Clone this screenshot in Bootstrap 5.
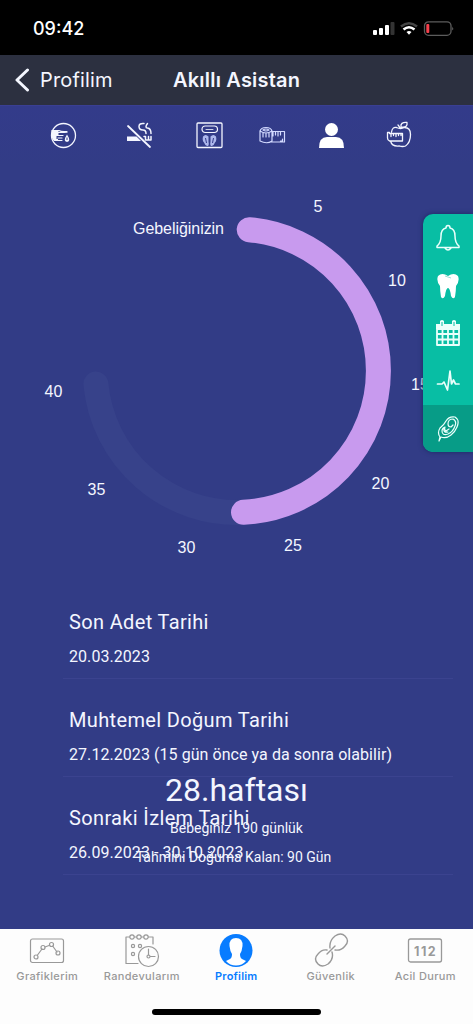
<!DOCTYPE html>
<html lang="tr">
<head>
<meta charset="utf-8">
<meta name="viewport" content="width=device-width, initial-scale=1">
<title>Akıllı Asistan</title>
<link rel="stylesheet" href="https://cdn.jsdelivr.net/npm/bootstrap@5.3.0/dist/css/bootstrap.min.css">
<style>
body{height:1024px;overflow:hidden;background:#323c86;color:#f4f6ff;font-family:Roboto,sans-serif}
svg{display:block}
.ln{fill:none;stroke:currentColor;stroke-linecap:round;stroke-linejoin:round}
.status{height:55px;background:#000;padding:3px 19px 0 33px;font:500 18px/22px Inter,sans-serif;color:#fff}
.topbar{height:50px;background:#2c3040;font-family:Inter,sans-serif;font-size:20px;padding-left:15px}
.topbar .back{color:#f4f6ff;text-decoration:none;font-size:20px;gap:10px;width:158px;letter-spacing:.15px}
.topbar h1{font-size:20px;font-weight:600;margin:0;letter-spacing:.2px}
.tools{height:60px;padding-left:50px;border-top:1px solid #3a3f93;background:linear-gradient(#333b8a,#323c86)}
.gauge{height:435px}
.gauge text{font:16px "Liberation Sans",sans-serif;fill:#f4f6ff}
.side{top:214px;right:0;width:50px;height:238px;background:#08bea4;border-radius:10px 0 0 10px;overflow:hidden;box-shadow:0 0 5px #1c2862;color:#eafffb}
.side a{color:inherit;height:48px}
.side a.on{background:#079c87;height:47px}
.facts{padding:0 20px 0 63px}
.facts li{height:98px;padding:27px 6px 0;border-bottom:1px solid #3b438f}
.facts li:first-child{height:79px;padding-top:8px}
.facts h2{font-size:20px;line-height:28px;margin:0 0 9px;font-weight:400;letter-spacing:.35px}
.facts p{font-size:16px;line-height:24px;margin:0;letter-spacing:.06px}
.summary{top:770px;left:0;right:0;text-align:center;font-size:14px}
.summary strong{font-size:32px;font-weight:400;line-height:40px;display:block}
.summary span{display:block;line-height:28.5px}
.summary .left-days{padding-right:6px}
.tabs{height:95px;background:#fdfdfd;bottom:0;left:0;right:0;font:500 11px/14px Inter,sans-serif;letter-spacing:.35px}
.tabs a{width:94.5px;color:#999;text-decoration:none;padding-top:3px}
.tabs a span{margin-top:-1px}
.tabs a.on{color:#087cff;font-weight:600;letter-spacing:.2px}
.homebar{width:169px;height:6px;border-radius:3px;background:#000;bottom:9px;left:152px}
.tool-b{margin-left:49px}.tool-c{margin-left:43px}.tool-d{margin-left:36px}.tool-e{margin-left:31px}.tool-f{margin-left:40px}
</style>
</head>
<body class="position-relative">
<header>
<div class="status d-flex align-items-center justify-content-between">
<span>09:42</span>
<svg width="84" height="16" viewBox="0 0 84 16"><g fill="#fff"><rect x="3" y="9" width="4" height="5" rx="1"/><rect x="9" y="7" width="4" height="7" rx="1"/><rect x="15" y="4" width="4" height="10" rx="1"/><rect x="20.500" y="1" width="4" height="13" rx="1" fill="#333"/></g><g fill="none" stroke-width="2.600"><path d="M31 5.500q8-6.500 16 0" stroke="#444"/><path d="M33.500 8.500q5.500-4.500 11 0" stroke="#fff"/></g><path d="M36.500 11q2.500-2 5 0L39 13.700z" fill="#fff"/><rect x="54.500" y=".8" width="26.500" height="13.500" rx="4" fill="none" stroke="#5c5c5c" stroke-width="1.300"/><rect x="56.300" y="3" width="3" height="9" rx="1" fill="#f6404c"/><path d="M82.300 5.500v4q1.700-2 0-4" fill="#777"/></svg>
</div>
<nav class="topbar d-flex align-items-center">
<a class="back d-flex align-items-center" href="#"><svg width="15" height="24" viewBox="0 0 15 24"><path class="ln" d="M12.500 2L2 12l10.500 10" stroke-width="3"/></svg><span>Profilim</span></a>
<h1>Akıllı Asistan</h1>
</nav>
</header>
<main>
<div class="tools d-flex align-items-center">
<svg width="27" height="27" viewBox="0 0 27 27"><circle class="ln" cx="13.500" cy="13.500" r="12" stroke-width="1.300"/><path d="M1.500 8.500h7v5.500H6.500v3H8v2H4Q2 17 1.500 14z" fill="currentColor"/><path class="ln" d="M2 8.500h7q2 1.500 8 1M3 10.500h14M7 13.500h6M8 16h4M8 18.500h4" stroke-width="1.200"/><path d="M17 12.500q-4.500 7 0 7.500 4.500-.5 0-7.500" fill="currentColor"/><path d="M17 15.500v2.500" stroke="#333b8a"/></svg>
<svg class="tool-b" width="27" height="27" viewBox="0 0 27 27"><path class="ln" d="M2 4l22 21" stroke-width="1.800"/><path d="M1 14.500h9.500l4.500 4.500H1z" fill="currentColor"/><path class="ln" d="M18 14.500h1.500V18m3-3.500V18m2.500-3.500V18h-5M18 1.500q-5-.5-5 3T17 8q3 0 3 3.500M21.500 1.500q-3 4 0 4.500 3.500.5 3.500 5.500" stroke-width="1.500"/></svg>
<svg class="tool-c" width="27" height="27" viewBox="0 0 27 27"><rect class="ln" x="1" y="1" width="25" height="24.500" rx="1" stroke-width="1.300"/><rect class="ln" x="6" y="4" width="15.500" height="6.500" rx="3.200" stroke-width="1.200"/><path class="ln" d="M10 7.500h7" stroke-width=".8"/><g fill="#aeb8ed"><path d="M12.500 14.500q-3-3-5.500 0-1 4 1 6 2 5 4.500 3 .5-2 0-4zM14.500 14.500q3-3 5.500 0 1 4-1 6-2 5-4.500 3-.5-2 0-4z"/></g><path d="M9.500 16l1 5m7-5l-1 5" stroke="#333b8a"/></svg>
<svg class="tool-d" width="27" height="27" viewBox="0 0 27 27"><g class="ln" stroke-width="1.200" style="stroke:#d3daff"><path d="M1 9v10q7 3.500 12 0V9Q7 13 1 9q1-3.500 6-3.500T13 9M4 8q3 2 6 0-3-2-6 0M13 9.500h12.500V20H12M4 11v4m3-4v4m3-4v4m4-5v4m2.500-4v3m2.500-3v4m2.500-4v3m0 6h2v-2"/></g></svg>
<svg class="tool-e" width="29" height="27" viewBox="0 0 29 27" fill="#fff"><circle cx="14.500" cy="7.500" r="6.500"/><path d="M2 26q0-11 8-11h9q8 0 8 11z"/></svg>
<svg class="tool-f" width="27" height="29" viewBox="0 0 27 29"><g class="ln" stroke-width="1.300"><path d="M5.500 11q1-5.500 5-4.500 4 2 8 0 6 0 6 7 0 8-5 11.500-3 1-6 0Q6 26 4.500 20M14 7Q13 5 12 4m3 2q-1-5 6-4.500Q22 7 15 6M1.500 11.500h2v1h13v7.500H3.500q-2-1-2-3zM5 12.500v3m2.500-3v2m2.500-2v3m2.500-3v2m2.500-2v2"/></g></svg>
</div>
<svg class="gauge" width="473" viewBox="0 165 473 435">
<g fill="none" stroke-width="25" stroke-linecap="round"><path d="M243.500 512.300A141.600 141.600 0 0 1 95.900 384" stroke="#37428a"/><path d="M249.200 229.700A141.400 141.400 0 0 1 378.400 370.800A141.400 141.400 0 0 1 243.500 512.300" stroke="#c89aee"/></g>
<text x="133" y="233.500" textLength="91">Gebeliğinizin</text><text x="313.500" y="211.500">5</text><text x="388" y="286">10</text><text x="411" y="390">15</text><text x="371.500" y="489">20</text><text x="284" y="550.500">25</text><text x="177.500" y="552.500">30</text><text x="87.500" y="495">35</text><text x="44.500" y="397">40</text>
</svg>
<ul class="facts list-unstyled m-0">
<li><h2>Son Adet Tarihi</h2><p>20.03.2023</p></li>
<li><h2>Muhtemel Doğum Tarihi</h2><p>27.12.2023 (15 gün önce ya da sonra olabilir)</p></li>
<li><h2>Sonraki İzlem Tarihi</h2><p>26.09.2023 - 30.10.2023</p></li>
</ul>
</main>
<section class="summary position-absolute"><strong>28.haftası</strong><span class="mt-1">Bebeğiniz 190 günlük</span><span class="left-days">Tahmini Doğuma Kalan: 90 Gün</span></section>
<aside class="side position-absolute d-flex flex-column">
<a class="d-flex align-items-center justify-content-center" href="#"><svg width="26" height="28" viewBox="0 0 26 28"><path class="ln" d="M11 4q0-2.500 2-2.500T15 4q5 1 5 8 0 7 4 10v1.500H2V22q4-3 4-10 0-7 5-8M10 24q3 4 6 0" stroke-width="1.500"/></svg></a>
<a class="d-flex align-items-center justify-content-center" href="#"><svg width="24" height="26" viewBox="0 0 24 26"><path d="M12 3Q18-1 22 3q2 5-2 10 0 5-1 11-2 3-4-1-1-8-3-8t-3 8q-2 4-4 1-1-6-1-11-4-5-2-10 4-4 10 0" fill="#fff"/><path d="M9 3l6 2" stroke="#9edfd4"/></svg></a>
<a class="d-flex align-items-center justify-content-center" style="height:46px" href="#"><svg width="26" height="27" viewBox="0 0 26 27"><g class="ln" stroke-width="1.800"><path d="M2 9h22v16H2zM7.500 9v16M13 9v16M18.500 9v16M2 14h22M2 19.500h22"/></g><path d="M1 4h4V1q2-2 4 0v3h8V1q2-2 4 0v3h4v5H1z" fill="currentColor"/><path d="M7 2v4m12-4v4" stroke="#08bea4"/></svg></a>
<a class="d-flex align-items-center justify-content-center" style="height:49px" href="#"><svg width="24" height="26" viewBox="0 0 24 26"><path class="ln" d="M1.500 16H6l2-2 3.500 8L14 3l1.500 13 2-4 2 4h3.500" stroke-width="1.700"/></svg></a>
<a class="on d-flex align-items-center justify-content-center" href="#"><svg width="24" height="28" viewBox="0 0 24 28"><g class="ln" stroke-width="1.200"><path d="M3 26l1-4q-3-4 0-9 4-3 6-7 3-5 9-4 5 3 2 10-2 5-6 8-5 4-10 2l-2 4M12 9q0-5 5-5 4 2 2 7-2 6-7 8-6 2-6-3 0-3 3-4M12 9q0 3 3 3l2-2M9 12q-1 3 1 4l3-2m-5-1q-1 5 4 4"/></g></svg></a>
</aside>
<nav class="tabs position-absolute d-flex">
<a class="d-flex flex-column align-items-center" href="#"><svg width="38" height="38" viewBox="0 0 38 38"><g class="ln" stroke-width="1.200"><rect x="2.500" y="7" width="33" height="23.500" rx="2"/><path d="M9.500 23l4.500-6m3-2l4-1.500m4 1l4 5.500"/><circle cx="8" cy="25" r="2"/><circle cx="15" cy="15.500" r="2"/><circle cx="23.500" cy="12.500" r="2"/><circle cx="30" cy="21" r="2"/></g></svg><span>Grafiklerim</span></a>
<a class="d-flex flex-column align-items-center" href="#"><svg width="38" height="38" viewBox="0 0 38 38"><g class="ln" stroke-width="1.200"><path d="M6.500 5H3v26.500h12M11.500 5h2m5 0h2m5 0H30v7"/><circle cx="9" cy="5" r="2.200"/><circle cx="16" cy="5" r="2.200"/><circle cx="23" cy="5" r="2.200"/><circle cx="10" cy="14" r="1.600"/><circle cx="17" cy="14" r="1.600"/><circle cx="10" cy="22" r="1.600"/><circle cx="25.500" cy="24.500" r="10"/><circle cx="25.500" cy="24.500" r="1.500"/><path d="M25.500 17v6m2 1.500H32"/></g></svg><span>Randevularım</span></a>
<a class="on d-flex flex-column align-items-center" href="#"><svg width="38" height="38" viewBox="0 0 38 38"><circle cx="19" cy="18.500" r="16.500" fill="currentColor"/><path d="M19 6q7 0 6.500 8-.5 5-2.500 8 0 4 2 5l4 2Q25 33.500 19 33.500T9 29l4-2q2-1 2-5-2-3-2.500-8Q12 6 19 6" fill="#fff"/></svg><span>Profilim</span></a>
<a class="d-flex flex-column align-items-center" href="#"><svg width="38" height="38" viewBox="0 0 38 38"><g class="ln" stroke-width="1.400"><path d="M18 16Q17 9 23 4q6-4 10 0 5 5 0 10-4 5-10 4M20 20q2 7-4 12-6 4-10 0-5-5 0-10 4-5 9-4M15 22l8-8"/></g></svg><span>Güvenlik</span></a>
<a class="d-flex flex-column align-items-center" href="#"><svg width="38" height="38" viewBox="0 0 38 38"><rect class="ln" x="2.500" y="7" width="33" height="23" rx="2" stroke-width="1.300"/><text x="19" y="23.500" text-anchor="middle" textLength="22" font-family="Inter,sans-serif" font-size="12.500" font-weight="700" fill="currentColor">112</text></svg><span>Acil Durum</span></a>
<div class="homebar position-absolute"></div>
</nav>
<script src="https://cdn.jsdelivr.net/npm/bootstrap@5.3.0/dist/js/bootstrap.bundle.min.js"></script>
</body>
</html>
